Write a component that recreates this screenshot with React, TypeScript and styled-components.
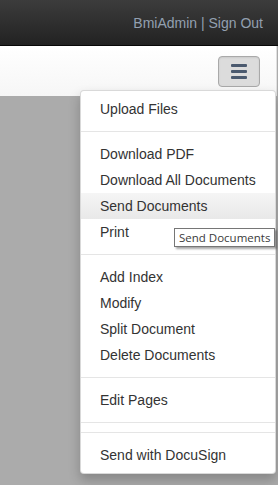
import React from "react";
import styled, { createGlobalStyle } from "styled-components";

const Global = createGlobalStyle`
  html, body { margin: 0; padding: 0; height: 100%; }
  body { font-family: "Liberation Sans", Arial, sans-serif; background: #ababab; overflow: hidden; }
  #root { height: 100%; }
`;

const Page = styled.div`
  position: relative;
  height: 485px;
  display: flex;
  flex-direction: column;
  background: #ababab;
`;

const TopBar = styled.header`
  height: 46px;
  box-sizing: border-box;
  border-bottom: 1px solid #080808;
  background: linear-gradient(to bottom, #3c3c3c 0%, #222 100%);
  display: flex;
  align-items: center;
  justify-content: flex-end;
  padding: 0 15px 0 0;
`;

const UserLinks = styled.div`
  color: #93a0b0;
  font-size: 14px;
  line-height: 20px;
  margin-top: 1px;
`;

const ToolBar = styled.div`
  height: 50px;
  box-sizing: border-box;
  background: linear-gradient(to bottom, #ffffff 0%, #f6f6f6 100%);
  border-right: 1px solid #e0e0e0;
  margin-right: 1px;
  display: flex;
  align-items: flex-start;
  justify-content: flex-end;
  padding: 10px 16px 0 0;
`;

const MenuButton = styled.button`
  width: 42px;
  height: 31px;
  box-sizing: border-box;
  border: 1px solid #a9a9a9;
  border-radius: 4px;
  background: #dcdcdc;
  box-shadow: inset 0 1px 2px rgba(0, 0, 0, 0.08);
  display: flex;
  flex-direction: column;
  align-items: center;
  justify-content: center;
  gap: 3px;
  padding: 0;
`;

const Bar = styled.span`
  display: block;
  width: 16px;
  height: 3px;
  border-radius: 1px;
  background: #4b5a6f;
`;

const Content = styled.div`
  flex: 1;
  background: #ababab;
`;

const Menu = styled.ul`
  position: absolute;
  top: 90px;
  left: 80px;
  width: 196px;
  box-sizing: border-box;
  margin: 0;
  padding: 5px 0;
  list-style: none;
  background: #fff;
  border: 1px solid rgba(0, 0, 0, 0.15);
  border-radius: 4px;
  box-shadow: 0 6px 12px rgba(0, 0, 0, 0.22);
`;

const Item = styled.li<{ $active?: boolean }>`
  padding: 3px 19px;
  font-size: 14px;
  line-height: 20px;
  color: #333;
  white-space: nowrap;
  background: ${(p) =>
    p.$active ? "linear-gradient(to bottom, #f5f5f5 0%, #e8e8e8 100%)" : "transparent"};
`;

const Divider = styled.li`
  height: 1px;
  margin: 9px 0;
  background: #e5e5e5;
`;

const Tooltip = styled.div`
  position: absolute;
  top: 228px;
  left: 174px;
  box-sizing: border-box;
  height: 19px;
  padding: 0 4px;
  background: #fff;
  border: 1px solid #767676;
  color: #3a3a3a;
  font-family: "Open Sans", "DejaVu Sans", sans-serif;
  font-size: 11.5px;
  line-height: 17px;
  white-space: nowrap;
  box-shadow: 2px 2px 2px rgba(0, 0, 0, 0.35);
`;

type Entry = { label: string; active?: boolean } | "divider";

const entries: Entry[] = [
  { label: "Upload Files" },
  "divider",
  { label: "Download PDF" },
  { label: "Download All Documents" },
  { label: "Send Documents", active: true },
  { label: "Print" },
  "divider",
  { label: "Add Index" },
  { label: "Modify" },
  { label: "Split Document" },
  { label: "Delete Documents" },
  "divider",
  { label: "Edit Pages" },
  "divider",
  "divider",
  { label: "Send with DocuSign" },
];

export default function App() {
  return (
    <>
      <Global />
      <Page>
        <TopBar>
          <UserLinks>BmiAdmin | Sign Out</UserLinks>
        </TopBar>
        <ToolBar>
          <MenuButton aria-label="Menu">
            <Bar />
            <Bar />
            <Bar />
          </MenuButton>
        </ToolBar>
        <Content />
        <Menu>
          {entries.map((e, i) =>
            e === "divider" ? (
              <Divider key={i} />
            ) : (
              <Item key={i} $active={e.active}>
                {e.label}
              </Item>
            )
          )}
        </Menu>
        <Tooltip>Send Documents</Tooltip>
      </Page>
    </>
  );
}
